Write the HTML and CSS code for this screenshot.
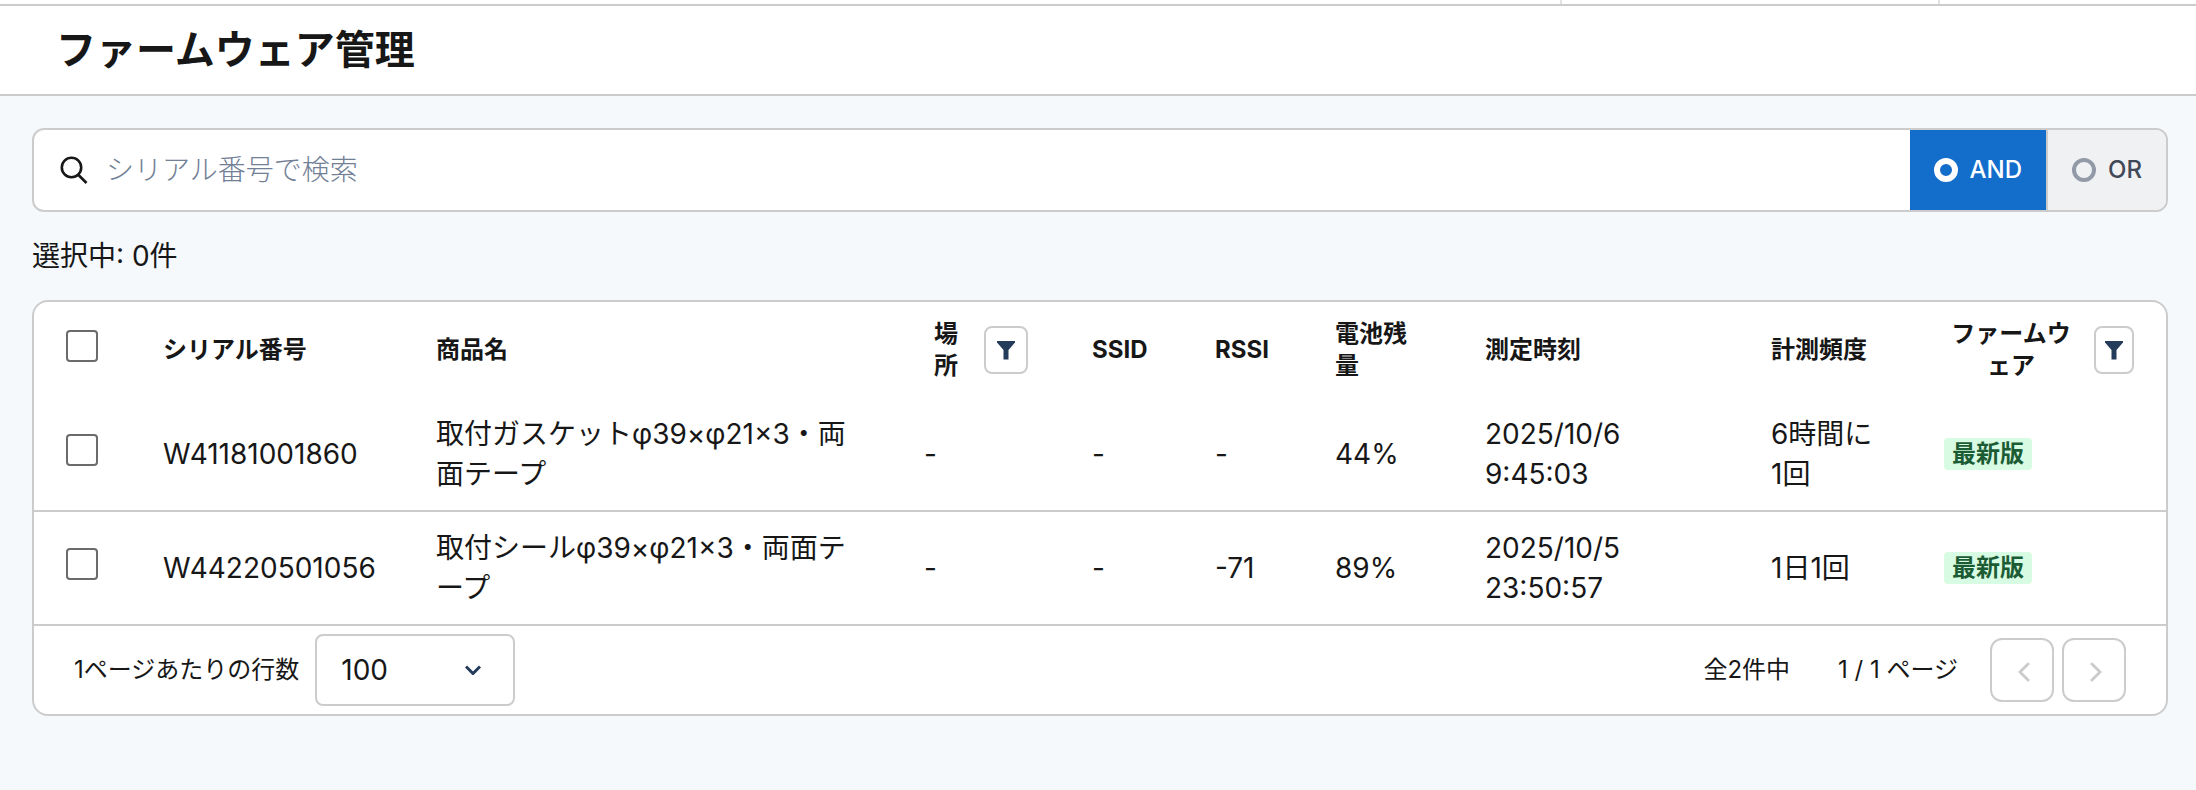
FILE: index.html
```html
<!DOCTYPE html>
<html lang="ja">
<head>
  <meta charset="UTF-8">
  <title>ファームウェア管理</title>
  <meta name="viewport" content="width=device-width, initial-scale=1">
  <link rel="stylesheet" href="styles.css">
</head>
<body>

  <div class="topbar">
    <div class="topbar-item topbar-account"></div>
    <div class="topbar-item topbar-menu"></div>
  </div>

  <header class="page-header">
    <h1>ファームウェア管理</h1>
  </header>

  <main>
    <div class="search">
      <label class="search-box">
        <svg class="search-icon" viewBox="0 0 28 28" fill="none" stroke="currentColor" stroke-width="2.6">
          <circle cx="11.5" cy="11.5" r="9.7"/>
          <path d="M18 18.5 L26.5 27"/>
        </svg>
        <input type="text" placeholder="シリアル番号で検索" aria-label="シリアル番号で検索">
      </label>
      <label class="mode">
        <input type="radio" name="mode" value="and" checked>
        AND
      </label>
      <label class="mode">
        <input type="radio" name="mode" value="or">
        OR
      </label>
    </div>

    <p class="selected">選択中: 0件</p>

    <div class="card">
      <table>
        <colgroup>
          <col class="col-check">
          <col class="col-serial">
          <col class="col-product">
          <col class="col-place">
          <col class="col-ssid">
          <col class="col-rssi">
          <col class="col-battery">
          <col class="col-time">
          <col class="col-freq">
          <col class="col-firmware">
        </colgroup>
        <thead>
          <tr>
            <th><input type="checkbox" aria-label="すべて選択"></th>
            <th>シリアル番号</th>
            <th>商品名</th>
            <th>
              <div class="filter-head">
                <span>場所</span>
                <button class="filter-btn" aria-label="場所で絞り込み">
                  <svg viewBox="0 0 20 20" fill="currentColor"><path d="M1 1h18v1.5L12.5 10v9.5h-5V10L1 2.5z"/></svg>
                </button>
              </div>
            </th>
            <th>SSID</th>
            <th>RSSI</th>
            <th>電池残量</th>
            <th>測定時刻</th>
            <th>計測頻度</th>
            <th>
              <div class="filter-head">
                <span>ファームウェア</span>
                <button class="filter-btn narrow" aria-label="ファームウェアで絞り込み">
                  <svg viewBox="0 0 20 20" fill="currentColor"><path d="M1 1h18v1.5L12.5 10v9.5h-5V10L1 2.5z"/></svg>
                </button>
              </div>
            </th>
          </tr>
        </thead>
        <tbody>
          <tr>
            <td><input type="checkbox" aria-label="W41181001860を選択"></td>
            <td>W41181001860</td>
            <td>取付ガスケットφ39×φ21×3・両面テープ</td>
            <td>-</td>
            <td>-</td>
            <td>-</td>
            <td>44%</td>
            <td>2025/10/6 9:45:03</td>
            <td>6時間に1回</td>
            <td><span class="badge">最新版</span></td>
          </tr>
          <tr>
            <td><input type="checkbox" aria-label="W44220501056を選択"></td>
            <td>W44220501056</td>
            <td>取付シールφ39×φ21×3・両面テープ</td>
            <td>-</td>
            <td>-</td>
            <td>-71</td>
            <td>89%</td>
            <td>2025/10/5 23:50:57</td>
            <td>1日1回</td>
            <td><span class="badge">最新版</span></td>
          </tr>
        </tbody>
      </table>

      <div class="pager">
        <label for="rows">1ページあたりの行数</label>
        <div class="select-wrap">
          <select id="rows">
            <option>20</option>
            <option>50</option>
            <option selected>100</option>
          </select>
          <svg class="select-arrow" viewBox="0 0 16 10" fill="none" stroke="currentColor" stroke-width="3"><path d="M1 1.5l7 7 7-7"/></svg>
        </div>
        <span class="total">全2件中</span>
        <span class="page">1 / 1 ページ</span>
        <div class="page-btns">
          <button disabled aria-label="前のページ">
            <svg viewBox="0 0 12 20" fill="none" stroke="currentColor" stroke-width="3" stroke-linecap="round" stroke-linejoin="round"><path d="M10 2L2 10l8 8"/></svg>
          </button>
          <button disabled aria-label="次のページ">
            <svg viewBox="0 0 12 20" fill="none" stroke="currentColor" stroke-width="3" stroke-linecap="round" stroke-linejoin="round"><path d="M2 2l8 8-8 8"/></svg>
          </button>
        </div>
      </div>
    </div>
  </main>

</body>
</html>
```
FILE: styles.css
```css
* {
  box-sizing: border-box;
}
body {
  margin: 0;
  font-family: Inter, "Noto Sans CJK JP", sans-serif;
  font-size: 28px;
  line-height: 40px;
  color: #171717;
  background: #f5f9fc;
}
input, select, button {
  font: inherit;
  color: inherit;
}
.topbar {
  display: flex;
  justify-content: flex-end;
  height: 6px;
  background: #fff;
  border-bottom: 2px solid #ccc;
}
.topbar-item {
  border-left: 2px solid #e2e2e2;
}
.topbar-account {
  width: 378px;
}
.topbar-menu {
  width: 258px;
}
.page-header {
  padding: 20px 56px;
  background: #fff;
  border-bottom: 2px solid #ccc;
}
h1 {
  margin: 0;
  font-size: 40px;
  line-height: 48px;
  font-weight: 700;
}
main {
  padding: 32px 28px 32px 32px;
}

/* search */
.search {
  display: flex;
  height: 84px;
  background: #fff;
  border: 2px solid #ccc;
  border-radius: 12px;
  overflow: hidden;
}
.search-box {
  flex: 1;
  display: flex;
  align-items: center;
  gap: 18px;
  padding-left: 26px;
}
.search-icon {
  width: 28px;
  height: 28px;
}
.search-box input {
  flex: 1;
  padding: 0;
  border: none;
  outline: none;
  background: none;
}
.search-box input::placeholder {
  color: #718096;
  font-weight: 300;
  opacity: 1;
}
.mode {
  display: flex;
  align-items: center;
  gap: 12px;
  padding: 0 24px;
  font-size: 24px;
  font-weight: 500;
  color: #414958;
  background: #f0f1f3;
  cursor: pointer;
}
.mode + .mode {
  border-left: 2px solid #ccc;
}
.mode:has(:checked) {
  color: #fff;
  background: #136dcb;
}
.mode input {
  appearance: none;
  width: 24px;
  height: 24px;
  margin: 0;
  border: 4px solid #9299a7;
  border-radius: 50%;
}
.mode input:checked {
  border: 6px solid #fff;
}
.selected {
  margin: 24px 0;
}

/* table */
.card {
  background: #fff;
  border: 2px solid #ccc;
  border-radius: 16px;
}
table {
  width: 100%;
  table-layout: fixed;
  border-collapse: separate;
  border-spacing: 0;
}
.col-check { width: 97px; }
.col-serial { width: 273px; }
.col-product { width: 488px; }
.col-place { width: 168px; }
.col-ssid { width: 123px; }
.col-rssi { width: 120px; }
.col-battery { width: 150px; }
.col-time { width: 286px; }
.col-freq { width: 173px; }
.col-firmware { width: 254px; }
th, td {
  padding: 16px 32px;
  text-align: left;
  vertical-align: middle;
}
th:first-child, td:first-child {
  padding-right: 0;
}
th {
  font-size: 24px;
  line-height: 32px;
  font-weight: 700;
}
td {
  border-bottom: 2px solid #ccc;
}
input[type="checkbox"] {
  appearance: none;
  display: block;
  width: 32px;
  height: 32px;
  margin: 0 0 8px;
  background: #fff;
  border: 2px solid #6b6b6b;
  border-radius: 4px;
}
input[type="checkbox"]:checked {
  background: #136dcb;
}
.filter-head {
  display: flex;
  align-items: center;
  gap: 16px;
}
.filter-head span {
  flex: 1;
  text-align: center;
}
.filter-btn {
  flex: none;
  display: flex;
  align-items: center;
  justify-content: center;
  width: 44px;
  height: 48px;
  padding: 0;
  color: #243b5a;
  background: #fff;
  border: 2px solid #ccc;
  border-radius: 8px;
}
.filter-btn.narrow {
  width: 40px;
}
.filter-btn svg {
  width: 20px;
  height: 20px;
}
.badge {
  display: block;
  width: fit-content;
  padding: 0 8px;
  font-size: 24px;
  line-height: 32px;
  font-weight: 700;
  color: #1c5c34;
  background: #d8fbe4;
  border-radius: 4px;
}

/* pager */
.pager {
  display: flex;
  align-items: center;
  padding: 8px 40px;
  font-size: 24px;
}
.select-wrap {
  position: relative;
  width: 200px;
  margin: 0 auto 0 16px;
}
select {
  appearance: none;
  display: block;
  width: 100%;
  height: 72px;
  padding: 0 24px;
  font-size: 28px;
  background: #fff;
  border: 2px solid #ccc;
  border-radius: 8px;
}
.select-arrow {
  position: absolute;
  top: 31px;
  right: 34px;
  width: 16px;
  height: 10px;
  color: #243b5a;
  pointer-events: none;
}
.page {
  margin: 0 32px 0 48px;
}
.page-btns {
  display: flex;
  gap: 8px;
}
.page-btns button {
  display: flex;
  align-items: center;
  justify-content: center;
  width: 64px;
  height: 64px;
  padding: 4px 0 0 4px;
  color: #ccc;
  background: #fff;
  border: 2px solid #ccc;
  border-radius: 12px;
}
.page-btns svg {
  width: 12px;
  height: 20px;
}
```
